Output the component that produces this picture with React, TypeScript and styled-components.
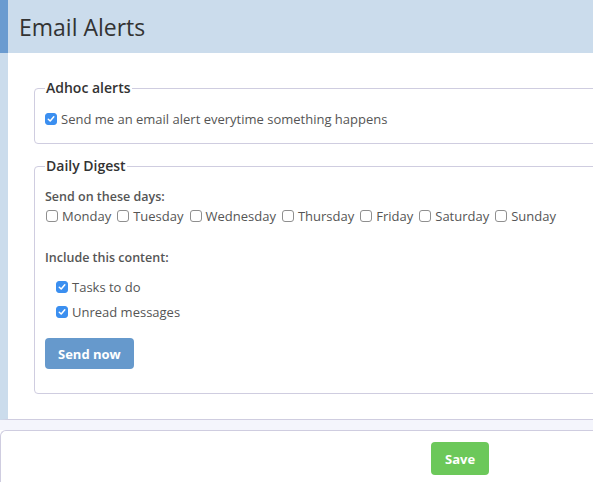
import * as React from "react";
import styled, { createGlobalStyle } from "styled-components";

const GlobalStyle = createGlobalStyle`
  html, body {
    margin: 0;
    padding: 0;
    background: #fff;
    overflow: hidden;
  }
  body {
    font-family: "Open Sans", "Liberation Sans", sans-serif;
    color: #555;
  }
`;

const Page = styled.div`
  width: 640px;
`;

const Panel = styled.section`
  border-left: 8px solid #cbdcec;
  border-bottom: 1px solid #cfcde0;
  background: #fff;
`;

const Header = styled.header`
  margin-left: -8px;
  border-left: 8px solid #6a9bd0;
  background: #cbdcec;
  height: 53px;
  display: flex;
  align-items: center;
  padding-left: 11px;
  h1 {
    margin: 0;
    font-size: 23px;
    font-weight: 400;
    color: #333;
  }
`;

const Body = styled.div`
  padding: 25px 0 25px 26px;
  display: flex;
  flex-direction: column;
  gap: 12px;
`;

const Fieldset = styled.fieldset<{ $bottom: number }>`
  margin: 0;
  border: 1px solid #cfcde0;
  border-radius: 4px;
  padding: 0 10px ${(p) => p.$bottom}px 10px;
  legend {
    padding: 0 1px;
    font-size: 14px;
    line-height: 20px;
    font-weight: 600;
    color: #333;
  }
`;

const Label = styled.div<{ $top: number }>`
  margin-top: ${(p) => p.$top}px;
  font-size: 12.5px;
  line-height: 18px;
  font-weight: 600;
  color: #555;
`;

const Days = styled.div`
  display: flex;
  gap: 6px;
  margin-top: 1px;
  padding-left: 1px;
`;

const ContentList = styled.div`
  display: flex;
  flex-direction: column;
  gap: 7px;
  margin-top: 11px;
  padding-left: 11px;
`;

const CheckRow = styled.label<{ $top?: number }>`
  display: inline-flex;
  align-items: center;
  gap: 4px;
  margin-top: ${(p) => p.$top ?? 0}px;
  font-size: 13px;
  line-height: 18px;
  color: #555;
`;

const Box = styled.span<{ $on: boolean }>`
  width: 12px;
  height: 12px;
  box-sizing: border-box;
  border-radius: 3px;
  display: inline-flex;
  align-items: center;
  justify-content: center;
  background: ${(p) => (p.$on ? "#3b8ff0" : "#fff")};
  border: 1px solid ${(p) => (p.$on ? "#3b8ff0" : "#8f8f8f")};
`;

const Button = styled.button<{ $tone: "blue" | "green" }>`
  border: none;
  border-radius: 4px;
  font-family: inherit;
  font-weight: 700;
  font-size: 13px;
  color: #fff;
  background: ${(p) => (p.$tone === "blue" ? "#6699cc" : "#6cc85a")};
  height: ${(p) => (p.$tone === "blue" ? 31 : 33)}px;
  padding: 0 ${(p) => (p.$tone === "blue" ? 13 : 14)}px;
`;

const SendWrap = styled.div`
  margin-top: 17px;
`;

const Band = styled.div`
  height: 10px;
  background: #f4f5fc;
`;

const Footer = styled.div`
  border-top: 1px solid #cfcde0;
  border-left: 1px solid #cfcde0;
  border-top-left-radius: 6px;
  padding: 11px 0 0 430px;
  height: 60px;
`;

const Check = ({ on, children, top }: { on: boolean; children: React.ReactNode; top?: number }) => (
  <CheckRow $top={top}>
    <Box $on={on}>
      {on && (
        <svg width="8" height="8" viewBox="0 0 8 8">
          <path d="M1.3 4.2 L3.2 6 L6.8 1.8" fill="none" stroke="#fff" strokeWidth="1.5" strokeLinecap="round" strokeLinejoin="round" />
        </svg>
      )}
    </Box>
    {children}
  </CheckRow>
);

const days = ["Monday", "Tuesday", "Wednesday", "Thursday", "Friday", "Saturday", "Sunday"];

export default function App() {
  return (
    <Page>
      <GlobalStyle />
      <Panel>
        <Header>
          <h1>Email Alerts</h1>
        </Header>
        <Body>
          <Fieldset $bottom={15}>
            <legend>Adhoc alerts</legend>
            <Check on top={12}>Send me an email alert everytime something happens</Check>
          </Fieldset>
          <Fieldset $bottom={24}>
            <legend>Daily Digest</legend>
            <Label $top={12}>Send on these days:</Label>
            <Days>
              {days.map((d) => (
                <Check key={d} on={false}>{d}</Check>
              ))}
            </Days>
            <Label $top={24}>Include this content:</Label>
            <ContentList>
              <Check on>Tasks to do</Check>
              <Check on>Unread messages</Check>
            </ContentList>
            <SendWrap>
              <Button $tone="blue">Send now</Button>
            </SendWrap>
          </Fieldset>
        </Body>
      </Panel>
      <Band />
      <Footer>
        <Button $tone="green">Save</Button>
      </Footer>
    </Page>
  );
}
